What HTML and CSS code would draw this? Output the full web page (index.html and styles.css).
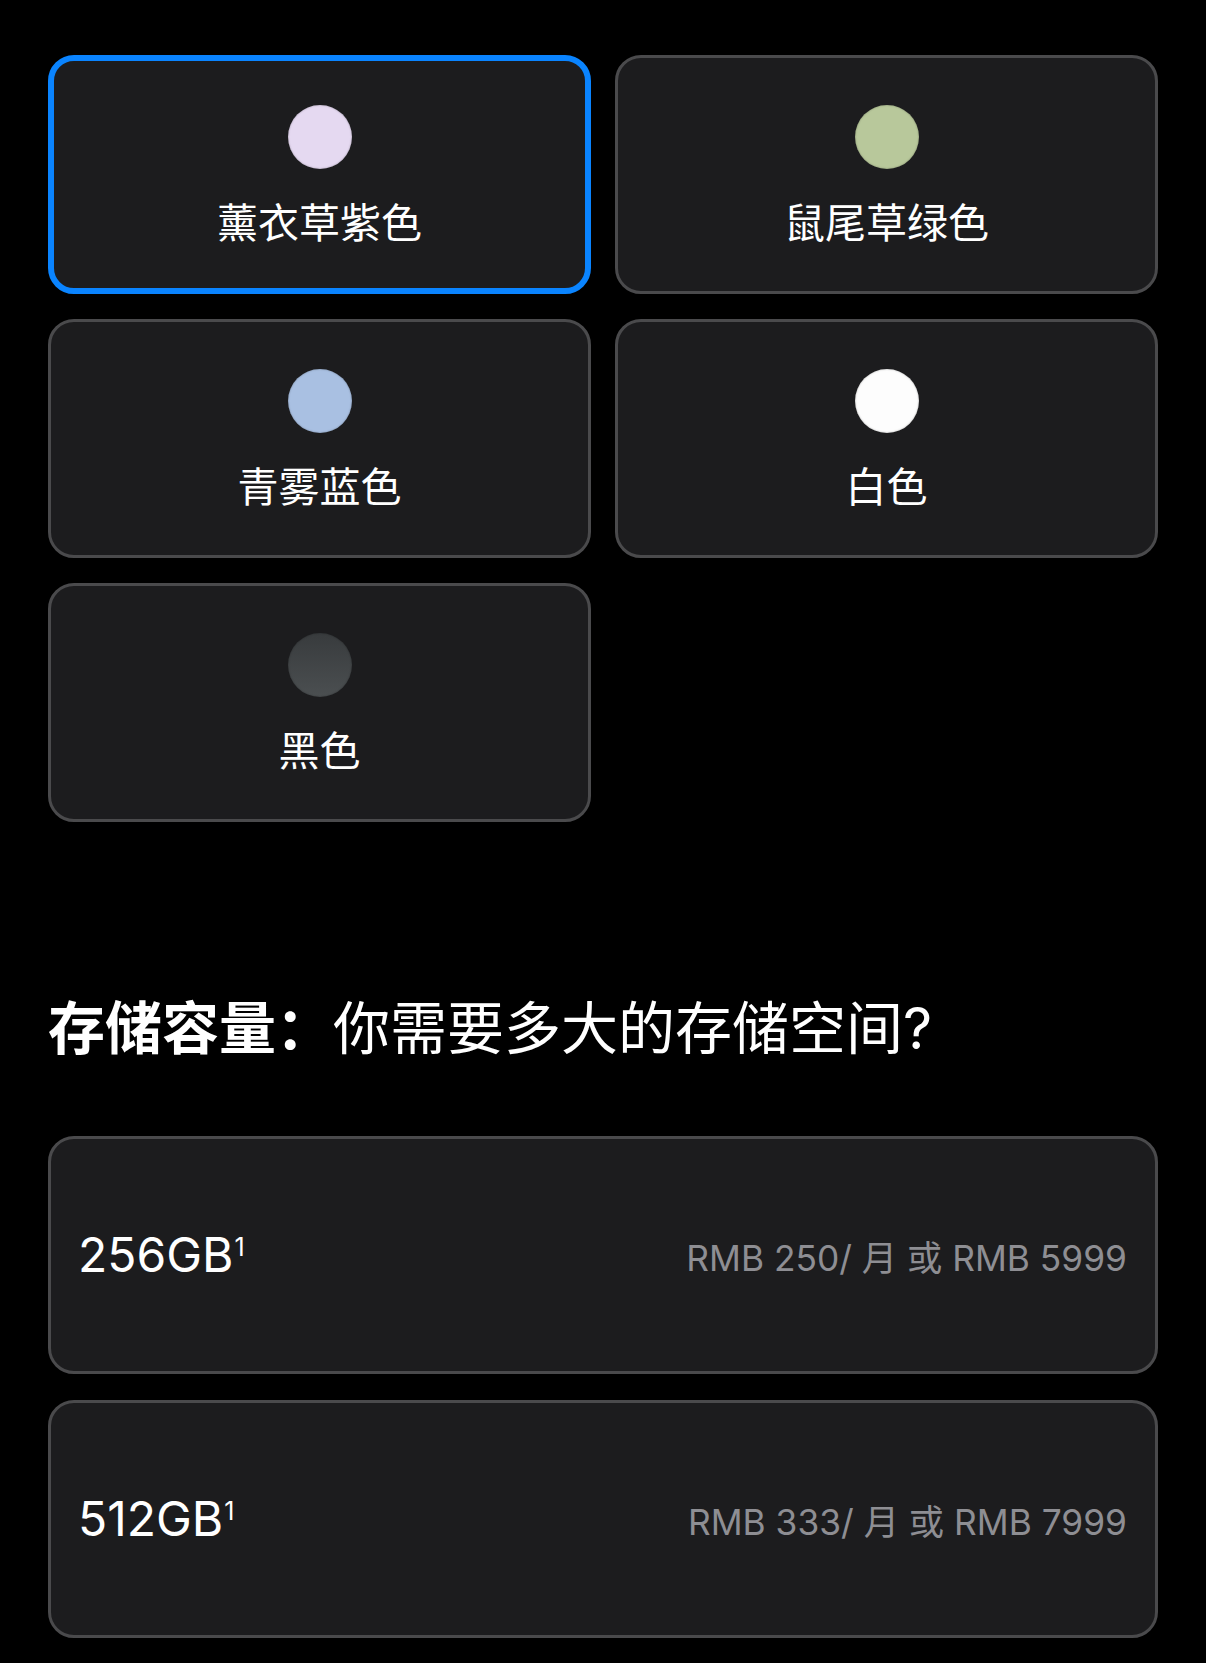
FILE: index.html
```html
<!DOCTYPE html>
<html lang="zh-CN">
<head>
    <meta charset="UTF-8">
    <meta name="viewport" content="width=device-width, initial-scale=1.0">
    <title>选择颜色和存储容量</title>
    <link rel="stylesheet" href="styles.css">
</head>
<body>
    <!-- Colour picker -->
    <div class="color-grid">
        <div class="option selected">
            <span class="swatch lavender"></span>
            <span class="label">薰衣草紫色</span>
        </div>
        <div class="option">
            <span class="swatch sage"></span>
            <span class="label">鼠尾草绿色</span>
        </div>
        <div class="option">
            <span class="swatch mist"></span>
            <span class="label">青雾蓝色</span>
        </div>
        <div class="option">
            <span class="swatch white"></span>
            <span class="label">白色</span>
        </div>
        <div class="option">
            <span class="swatch black"></span>
            <span class="label">黑色</span>
        </div>
    </div>

    <!-- Storage -->
    <h2 class="section-title"><b>存储容量：</b>你需要多大的存储空间?</h2>

    <div class="storage-list">
        <div class="storage">
            <span class="size">256GB<sup>1</sup></span>
            <span class="price">RMB 250/ 月 或 RMB 5999</span>
        </div>
        <div class="storage">
            <span class="size">512GB<sup>1</sup></span>
            <span class="price">RMB 333/ 月 或 RMB 7999</span>
        </div>
    </div>
</body>
</html>
```

FILE: styles.css
```css
body {
    margin: 0;
    padding: 55px 48px 0 48px;
    background-color: #000000;
    color: #ffffff;
    font-family: Inter, "Noto Sans CJK SC", sans-serif;
}

.color-grid {
    display: grid;
    grid-template-columns: 1fr 1fr;
    gap: 25px 24px;
}
.option {
    height: 239px;
    box-sizing: border-box;
    display: flex;
    flex-direction: column;
    align-items: center;
    justify-content: center;
    gap: 27px;
    background-color: #1c1c1e;
    border: 3px solid #4a4a4c;
    border-radius: 26px;
}
.option.selected {
    border: 6px solid #0a84ff; /* Apple blue */
}
.swatch {
    width: 64px;
    height: 64px;
    border-radius: 50%;
    box-shadow: inset 0 0 2px rgba(0, 0, 0, 0.35);
}
.lavender { background-color: #e5d9f1; }
.sage { background-color: #b8c89b; }
.mist { background-color: #a9c0e2; }
.white { background-color: #fdfdfd; }
.black { background: linear-gradient(#383b3d, #4b4f51); }
.label {
    font-family: "Noto Sans CJK SC", sans-serif;
    font-size: 41px;
    line-height: 49px;
}

.section-title {
    margin: 173px 0 73px 0;
    font-size: 57px;
    line-height: 68px;
    font-weight: 400;
}
.section-title b {
    font-weight: 700;
}

.storage-list {
    display: flex;
    flex-direction: column;
    gap: 26px;
}
.storage {
    height: 238px;
    box-sizing: border-box;
    display: flex;
    align-items: center;
    justify-content: space-between;
    padding: 0 28px 0 27px;
    background-color: #1c1c1e;
    border: 3px solid #4a4a4c;
    border-radius: 26px;
}
.size {
    font-size: 48px;
    line-height: 1;
}
.size sup {
    font-size: 25px;
    vertical-align: 16px;
    line-height: 0;
    margin-left: 1px;
}
.price {
    color: #8e8e93;
    font-size: 35.3px;
}
```
